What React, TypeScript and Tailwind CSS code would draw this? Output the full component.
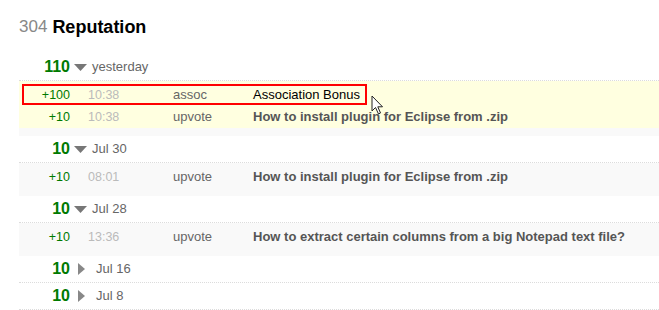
import React from "react";

type Entry = { amount: string; time: string; kind: string; title: string; link?: boolean };
type Day = { total: number; label: string; open: boolean; highlight?: boolean; entries: Entry[] };

const days: Day[] = [
  {
    total: 110,
    label: "yesterday",
    open: true,
    highlight: true,
    entries: [
      { amount: "+100", time: "10:38", kind: "assoc", title: "Association Bonus" },
      { amount: "+10", time: "10:38", kind: "upvote", title: "How to install plugin for Eclipse from .zip", link: true },
    ],
  },
  {
    total: 10,
    label: "Jul 30",
    open: true,
    entries: [{ amount: "+10", time: "08:01", kind: "upvote", title: "How to install plugin for Eclipse from .zip", link: true }],
  },
  {
    total: 10,
    label: "Jul 28",
    open: true,
    entries: [
      { amount: "+10", time: "13:36", kind: "upvote", title: "How to extract certain columns from a big Notepad text file?", link: true },
    ],
  },
  { total: 10, label: "Jul 16", open: false, entries: [] },
  { total: 10, label: "Jul 8", open: false, entries: [] },
];

function DayHeader({ day }: { day: Day }) {
  return (
    <div className="flex h-[27px] items-center border-b border-dotted border-[#dcdcdc]">
      <span className="w-[51px] text-right text-[16px] font-bold text-[#007a00]">{day.total}</span>
      {day.open ? (
        <svg className="ml-[4px] mr-[5px]" width="13" height="7" viewBox="0 0 13 7">
          <path d="M0 0 H13 L6.5 7 Z" fill="#777" />
        </svg>
      ) : (
        <svg className="ml-[8px] mr-[11px]" width="7" height="12" viewBox="0 0 7 12">
          <path d="M0 0 L7 6 L0 12 Z" fill="#888" />
        </svg>
      )}
      <span className="text-[13px] text-[#666]">{day.label}</span>
    </div>
  );
}

function EntryRow({ entry }: { entry: Entry }) {
  return (
    <div className="flex h-[22px] items-center">
      <span className="w-[51px] text-right text-[12.5px] text-[#007a00]">{entry.amount}</span>
      <span className="ml-[18px] w-[85px] text-[12.5px] text-[#bbb]">{entry.time}</span>
      <span className="w-[80px] text-[13px] text-[#666]">{entry.kind}</span>
      <span className={entry.link ? "text-[13px] font-bold text-[#555]" : "text-[13px] text-black"}>{entry.title}</span>
    </div>
  );
}

export default function App() {
  return (
    <div className="relative h-[310px] w-[659px] overflow-hidden bg-white pl-[19px] font-['Liberation_Sans',Arial,sans-serif]">
      <h1 className="mt-[15px] flex h-[24px] items-center gap-[5px] text-[18px] leading-[24px]">
        <span className="text-[17px] text-[#888]">304</span>
        <span className="font-bold text-black">Reputation</span>
      </h1>

      <div className="mt-[15px]">
        {days.map((day) => (
          <div key={day.label}>
            <DayHeader day={day} />
            {day.open && (
              <div className="bg-[#f9f9f9] pb-[8px]">
                <div className={day.highlight ? "bg-[#ffffe0] pt-[3px]" : "pt-[3px]"}>
                  {day.entries.map((entry, i) => (
                    <EntryRow key={i} entry={entry} />
                  ))}
                </div>
              </div>
            )}
          </div>
        ))}
      </div>

      {/* annotation box + cursor */}
      <div className="absolute left-[22px] top-[84px] h-[21px] w-[345px] border-2 border-[#f00]" />
      <svg className="absolute left-[371px] top-[95px]" width="14" height="20" viewBox="0 0 14 20">
        <path d="M1 1 V16 L4.5 12.5 L7.5 19 L9.5 18 L6.8 11.8 H11.5 Z" fill="#fff" stroke="#222" strokeWidth="1" strokeLinejoin="round" />
      </svg>
    </div>
  );
}
